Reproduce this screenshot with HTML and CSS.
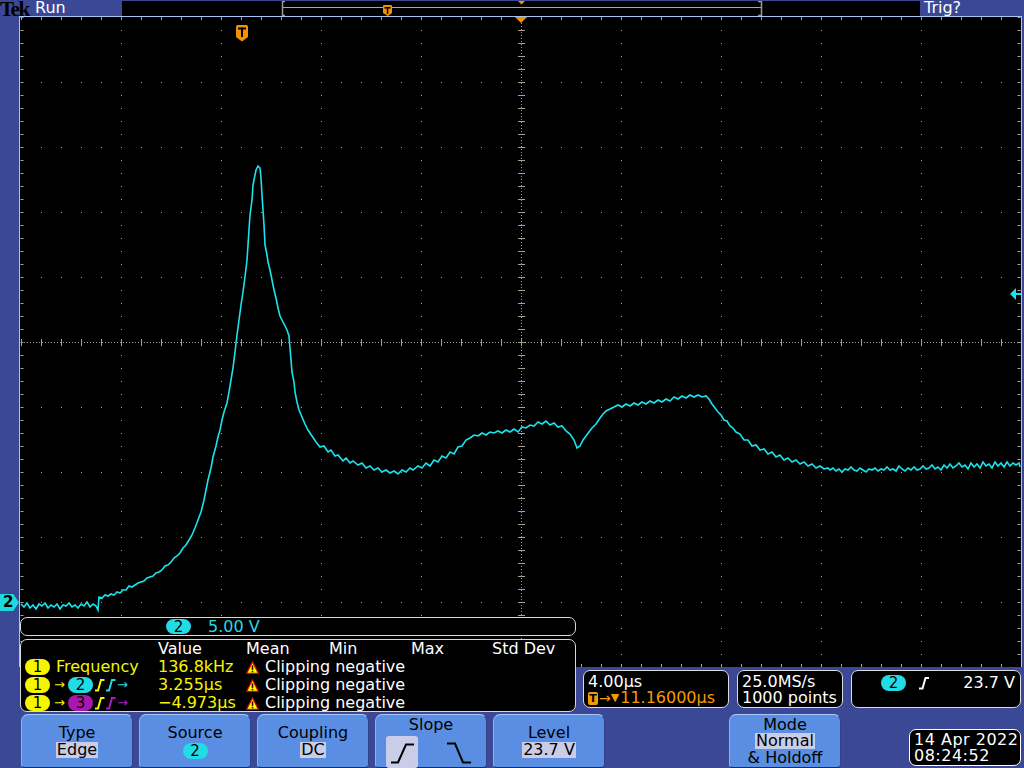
FILE: index.html
```
<!DOCTYPE html>
<html>
<head>
<meta charset="utf-8">
<link rel="stylesheet" href="styles.css">
</head>
<body>
<div class="screen">
  <div class="topbar">
    <span class="tek">Tek</span>
    <span class="run">Run</span>
    <div class="record">
      <svg width="798" height="15" viewBox="0 0 798 15">
        <rect x="0" y="0" width="798" height="15" fill="#000"/>
        <path d="M163 0.5H160.5V14.5H163" fill="none" stroke="#9a9a9a" stroke-width="1.5"/>
        <path d="M636 0.5H639.5V14.5H636" fill="none" stroke="#9a9a9a" stroke-width="1.5"/>
        <line x1="161" y1="6.5" x2="639" y2="6.5" stroke="#1ee0e8" stroke-width="1"/>
        <path d="M262 4H269Q270 4 270 5V12L266 15L261 12V5Q261 4 262 4Z" fill="#f39200"/>
        <rect x="262.5" y="6" width="6" height="1.6" fill="#000"/>
        <rect x="264.8" y="6" width="1.5" height="7" fill="#000"/>
        <path d="M396 0H403L399.5 3.5Z" fill="#f39200"/>
      </svg>
    </div>
    <span class="trig">Trig?</span>
  </div>

  <div class="middle">
    <div class="lstrip"><div class="chmark">2</div></div>
    <svg class="grat" width="1005" height="651" viewBox="19 16 1005 651">
      <rect x="20" y="17" width="1001" height="650" fill="#000"/>
      <g stroke="#a8a28e" stroke-width="1">
        <line x1="121.5" y1="17" x2="121.5" y2="667" stroke-dasharray="1 12"/>
        <line x1="221.5" y1="17" x2="221.5" y2="667" stroke-dasharray="1 12"/>
        <line x1="321.5" y1="17" x2="321.5" y2="667" stroke-dasharray="1 12"/>
        <line x1="421.5" y1="17" x2="421.5" y2="667" stroke-dasharray="1 12"/>
        <line x1="621.5" y1="17" x2="621.5" y2="667" stroke-dasharray="1 12"/>
        <line x1="721.5" y1="17" x2="721.5" y2="667" stroke-dasharray="1 12"/>
        <line x1="821.5" y1="17" x2="821.5" y2="667" stroke-dasharray="1 12"/>
        <line x1="921.5" y1="17" x2="921.5" y2="667" stroke-dasharray="1 12"/>
        <line x1="21" y1="82.5" x2="1021" y2="82.5" stroke-dasharray="1 19"/>
        <line x1="21" y1="147.5" x2="1021" y2="147.5" stroke-dasharray="1 19"/>
        <line x1="21" y1="212.5" x2="1021" y2="212.5" stroke-dasharray="1 19"/>
        <line x1="21" y1="277.5" x2="1021" y2="277.5" stroke-dasharray="1 19"/>
        <line x1="21" y1="407.5" x2="1021" y2="407.5" stroke-dasharray="1 19"/>
        <line x1="21" y1="472.5" x2="1021" y2="472.5" stroke-dasharray="1 19"/>
        <line x1="21" y1="537.5" x2="1021" y2="537.5" stroke-dasharray="1 19"/>
        <line x1="21" y1="602.5" x2="1021" y2="602.5" stroke-dasharray="1 19"/>
        <line x1="21" y1="342.5" x2="1021" y2="342.5" stroke-dasharray="1 2"/>
        <line x1="521.5" y1="17" x2="521.5" y2="667" stroke-dasharray="1 2"/>
        <line x1="21" y1="342.5" x2="1021" y2="342.5" stroke-width="7" stroke-dasharray="1 19"/>
        <line x1="521.5" y1="17" x2="521.5" y2="667" stroke-width="7" stroke-dasharray="1 12"/>
        <line x1="21" y1="18.5" x2="1021" y2="18.5" stroke-width="3" stroke-dasharray="1 19"/>
        <line x1="21" y1="665.5" x2="1021" y2="665.5" stroke-width="3" stroke-dasharray="1 19"/>
        <line x1="22" y1="17" x2="22" y2="667" stroke-width="3" stroke-dasharray="1 12"/>
        <line x1="1019" y1="17" x2="1019" y2="667" stroke-width="3" stroke-dasharray="1 12"/>
      </g>
      <line x1="19" y1="16.5" x2="1022" y2="16.5" stroke="#a4c4f4"/>
      <line x1="19.5" y1="16" x2="19.5" y2="667" stroke="#a4c4f4"/>
      <line x1="1021.5" y1="16" x2="1021.5" y2="667" stroke="#a4c4f4"/>
      <path d="M515 17H527L521 23Z" fill="#f39200"/>
      <path d="M237.5 25H246.5Q248 25 248 26.5V37L242 41.5L236 37V26.5Q236 25 237.5 25Z" fill="#f39200"/>
      <rect x="238" y="27.5" width="8" height="2" fill="#000"/>
      <rect x="241" y="27.5" width="2" height="9.5" fill="#000"/>
      <path d="M1010 294L1016 288V300Z" fill="#1ee0e8"/>
      <rect x="1016" y="293" width="5" height="2" fill="#1ee0e8"/>
      <polyline class="wave" points="21,604 24,607 27,603 30,608 33,605 36,609 39,604 42,606 45,603 48,608 51,605 54,607 57,604 60,609 63,605 66,606 69,603 72,607 75,605 78,608 81,604 84,606 87,602 90,607 93,604 96,606 98,610 99,597 102,598 105,595 108,596 111,594 114,595 117,592 120,593 123,590 126,590 129,586 132,587 135,585 138,583 141,582 144,581 147,578 150,577 153,576 156,573 159,572 162,570 165,566 168,565 171,562 174,558 177,556 180,553 183,548 186,545 189,540 192,535 195,528 198,520 201,512 204,500 206,490 208,480 211,468 213,457 216,446 218,437 220,430 222,420 224,412 227,403 229,392 231,380 233,368 235,352 237,335 239,320 241,305 243,292 245,277 247,260 248,245 249,230 250,215 252,200 253,185 255,175 256,170 258,166 260,168 261,178 262,195 263,210 264,225 265,245 267,255 268,262 270,270 272,280 274,290 276,298 278,308 280,316 283,322 285,326 287,330 289,336 290,348 291,360 292,372 294,382 295,392 297,402 299,410 302,417 305,424 308,430 312,436 316,442 320,447 324,446 328,452 331,450 335,456 338,455 343,461 346,458 350,463 353,461 358,465 362,463 366,468 370,466 374,470 378,468 382,472 386,470 390,473 394,471 398,474 402,470 406,472 410,468 413,470 418,466 422,468 426,463 430,466 434,460 438,462 442,456 446,458 450,452 454,454 458,447 462,446 466,440 470,438 474,435 478,436 482,433 486,435 490,432 494,433 498,431 502,433 506,430 510,432 514,429 518,432 522,427 526,428 530,425 534,426 538,422 542,424 546,421 550,425 554,423 558,427 562,426 566,431 570,434 574,440 577,448 580,446 583,440 586,436 589,432 592,428 596,424 600,418 603,414 606,411 610,409 614,407 618,405 622,407 626,404 630,406 634,403 638,405 642,402 646,404 650,401 654,403 658,400 662,402 666,399 670,401 674,397 678,399 682,396 686,398 690,395 694,397 698,395 702,397 706,396 709,399 712,404 715,408 718,412 721,415 724,420 727,421 730,426 733,428 736,432 740,434 744,440 748,440 752,446 756,445 760,450 764,449 768,454 772,452 776,457 780,455 784,460 788,458 792,462 796,460 800,464 804,462 808,466 812,464 816,468 820,466 824,469 828,468 830,470 833,468 836,471 839,469 842,472 845,469 848,470 851,467 854,470 857,471 860,468 863,470 866,472 869,469 872,470 875,468 878,471 881,469 884,470 887,467 890,470 893,469 896,471 899,466 902,469 905,471 908,468 911,470 914,467 917,470 920,469 923,466 926,469 929,468 932,465 935,469 938,467 941,470 944,465 947,468 950,464 953,468 956,466 959,463 962,467 965,465 968,469 971,463 974,467 977,464 980,468 983,462 986,466 989,464 992,468 995,462 998,466 1001,463 1004,467 1007,462 1010,466 1013,463 1016,465 1019,463 1020,467"/>
    </svg>
  </div>

  <div class="inforow">
    <div class="ibox ibox-a">
      <div>4.00µs</div>
      <div class="orange"><span class="ticon">T</span><span class="arr">→</span><span class="tri">▼</span>11.16000µs</div>
    </div>
    <div class="ibox ibox-b">
      <div>25.0MS/s</div>
      <div>1000 points</div>
    </div>
    <div class="ibox ibox-c">
      <span class="pill cyan">2</span>
      <svg class="edge" width="11" height="14" viewBox="0 0 11 14"><path d="M0 12.5H3.5L6.5 2H10" fill="none" stroke="#fff" stroke-width="2"/></svg>
      <span class="lvl">23.7 V</span>
    </div>
  </div>

  <div class="softkeys">
    <div class="key"><span>Type</span><span class="hl">Edge</span></div>
    <div class="key"><span>Source</span><span class="pill cyan kpill">2</span></div>
    <div class="key"><span>Coupling</span><span class="hl">DC</span></div>
    <div class="key key-slope">
      <span>Slope</span>
      <div class="slope-row">
        <div class="slope-sel">
          <svg width="32" height="32" viewBox="0 0 32 32"><path d="M5 26.5H12L20 8.5H28" fill="none" stroke="#000" stroke-width="2"/></svg>
        </div>
        <svg class="fall" width="26" height="32" viewBox="0 0 26 32"><path d="M0 7.5H8L16 26.5H24" fill="none" stroke="#000" stroke-width="2"/></svg>
      </div>
    </div>
    <div class="key"><span>Level</span><span class="hl">23.7 V</span></div>
    <div class="key key-mode"><span>Mode</span><span class="hl">Normal</span><span>&amp; Holdoff</span></div>
    <div class="date"><div>14 Apr 2022</div><div>08:24:52</div></div>
  </div>

  <div class="meas">
    <div class="scalebox"><span class="pill cyan">2</span><span class="scaleval">5.00 V</span></div>
    <div class="mtable">
      <span></span><span>Value</span><span>Mean</span><span>Min</span><span>Max</span><span>Std Dev</span>

      <span class="lab"><span class="pill yellow">1</span><span class="ytext">Frequency</span></span>
      <span class="ytext">136.8kHz</span>
      <span class="mean"><svg class="warn" width="13" height="13" viewBox="0 0 13 13"><path d="M6.5 0.8L12.3 12.3H0.7Z" fill="#ff0" stroke="#e00000" stroke-width="1.2"/><rect x="5.7" y="4.3" width="1.6" height="4.6" fill="#300"/><rect x="5.7" y="9.8" width="1.6" height="1.5" fill="#300"/></svg>Clipping negative</span>

      <span class="lab"><span class="pill yellow">1</span><span class="arr ytext">→</span><span class="pill cyan">2</span><svg class="edge" width="10" height="14" viewBox="0 0 10 14"><path d="M0 12.5H3L6 2H9.5" fill="none" stroke="#f5f500" stroke-width="2"/></svg><svg class="edge" width="10" height="14" viewBox="0 0 10 14"><path d="M0 12.5H3L6 2H9.5" fill="none" stroke="#21dce4" stroke-width="2"/></svg><span class="arr ctext">→</span></span>
      <span class="ytext">3.255µs</span>
      <span class="mean"><svg class="warn" width="13" height="13" viewBox="0 0 13 13"><path d="M6.5 0.8L12.3 12.3H0.7Z" fill="#ff0" stroke="#e00000" stroke-width="1.2"/><rect x="5.7" y="4.3" width="1.6" height="4.6" fill="#300"/><rect x="5.7" y="9.8" width="1.6" height="1.5" fill="#300"/></svg>Clipping negative</span>

      <span class="lab"><span class="pill yellow">1</span><span class="arr ytext">→</span><span class="pill magenta">3</span><svg class="edge" width="10" height="14" viewBox="0 0 10 14"><path d="M0 12.5H3L6 2H9.5" fill="none" stroke="#f5f500" stroke-width="2"/></svg><svg class="edge" width="10" height="14" viewBox="0 0 10 14"><path d="M0 12.5H3L6 2H9.5" fill="none" stroke="#b01cb8" stroke-width="2"/></svg><span class="arr mtext">→</span></span>
      <span class="ytext">−4.973µs</span>
      <span class="mean"><svg class="warn" width="13" height="13" viewBox="0 0 13 13"><path d="M6.5 0.8L12.3 12.3H0.7Z" fill="#ff0" stroke="#e00000" stroke-width="1.2"/><rect x="5.7" y="4.3" width="1.6" height="4.6" fill="#300"/><rect x="5.7" y="9.8" width="1.6" height="1.5" fill="#300"/></svg>Clipping negative</span>
    </div>
  </div>
</div>
</body>
</html>
```
FILE: styles.css
```
* { box-sizing: border-box; }
html, body { margin: 0; padding: 0; background: #3a4896; }
body { font-family: "DejaVu Sans", "Noto Sans", sans-serif; }

.screen {
  position: relative;
  width: 1024px;
  height: 768px;
  overflow: hidden;
  background: #3a4896;
  display: flex;
  flex-direction: column;
}

/* top bar */
.topbar { height: 16px; display: flex; align-items: stretch; }
.tek {
  width: 35px;
  font-family: "Liberation Serif", serif;
  font-weight: bold;
  font-size: 21px;
  line-height: 16px;
  letter-spacing: -1.5px;
  color: #000;
  margin-top: 1px;
}
.run { width: 87px; color: #fff; font-size: 16px; line-height: 16px; }
.record { width: 798px; padding-top: 1px; }
.record svg { display: block; }
.trig { color: #fff; font-size: 16px; line-height: 16px; padding-left: 4px; }

/* graticule */
.middle { height: 651px; display: flex; }
.lstrip {
  width: 19px;
  display: flex;
  flex-direction: column;
  justify-content: flex-end;
  padding-bottom: 56px;
}
.chmark {
  width: 19px;
  height: 17px;
  background: #1ed8e0;
  clip-path: polygon(0 0, 70% 0, 100% 50%, 70% 100%, 0 100%);
  color: #000;
  font-size: 15px;
  font-weight: bold;
  line-height: 17px;
  padding-left: 3px;
}
.grat { display: block; flex: none; }
.wave { fill: none; stroke: #19e4ee; stroke-width: 1.6; stroke-linejoin: miter; }

/* info boxes */
.inforow { height: 47px; display: flex; gap: 8px; padding: 3px 0 0 583px; }
.ibox {
  height: 38px;
  border: 1px solid #dcdcdc;
  border-radius: 7px;
  background: #000;
  color: #fff;
  font-size: 16px;
  line-height: 16px;
  padding: 3px 0 0 4px;
}
.ibox-a { width: 146px; }
.ibox-b { width: 106px; }
.ibox-c { width: 170px; display: flex; align-items: flex-start; padding-left: 29px; padding-top: 4px; }
.orange { color: #f59a00; display: flex; align-items: center; }
.ticon {
  display: inline-block;
  width: 10px;
  height: 13px;
  background: #f59a00;
  color: #000;
  border-radius: 2px;
  font-size: 11px;
  font-weight: bold;
  line-height: 13px;
  text-align: center;
  margin-right: 1px;
}
.orange .arr { font-size: 14px; }
.tri { font-size: 11px; margin: 0 1px 0 0; }
.ibox-c .edge { margin: 1px 0 0 13px; }
.lvl { margin-left: auto; padding-right: 5px; }

/* pills */
.pill {
  display: inline-flex;
  justify-content: center;
  align-items: center;
  width: 25px;
  height: 16px;
  border-radius: 8px;
  color: #000;
  font-size: 15px;
  line-height: 16px;
  flex: none;
}
.cyan { background: #21dce4; }
.yellow { background: #f5f500; }
.magenta { background: #a817ae; }

/* soft keys */
.softkeys { height: 54px; display: flex; gap: 6px; padding-left: 21px; }
.key {
  width: 112px;
  height: 54px;
  background: #5a8ee2;
  border: 1px solid;
  border-color: #a8c8f8 #30428c #1c2766 #8cb2f0;
  border-radius: 7px 7px 4px 4px;
  color: #000;
  font-size: 16px;
  line-height: 18px;
  display: flex;
  flex-direction: column;
  align-items: center;
  justify-content: center;
}
.hl { background: #c9cde8; line-height: 16px; padding: 0 1px; }
.kpill { margin-top: 1px; }
.key-slope { justify-content: flex-start; padding-top: 1px; }
.slope-row { display: flex; width: 100%; padding-left: 10px; margin-top: 2px; align-items: flex-start; }
.slope-sel { width: 32px; height: 32px; background: #c9cde8; border-radius: 3px; }
.slope-sel svg, .fall { display: block; }
.fall { margin-left: 29px; }
.key-mode { margin-left: 118px; line-height: 17px; }
.date {
  width: 112px;
  height: 37px;
  margin: 15px 0 0 62px;
  border: 1px solid #fff;
  border-radius: 7px;
  background: #000;
  color: #fff;
  font-size: 16px;
  line-height: 16px;
  letter-spacing: 0.5px;
  padding: 2px 0 0 4px;
}

/* measurement overlay */
.meas {
  position: absolute;
  left: 20px;
  top: 617px;
  width: 556px;
  display: flex;
  flex-direction: column;
  gap: 3px;
}
.scalebox {
  height: 19px;
  border: 1px solid #d8d8d8;
  border-radius: 7px;
  background: #000;
  display: flex;
  align-items: center;
  padding-left: 145px;
  color: #21dce4;
  font-size: 16px;
}
.scalebox .pill { height: 15px; }
.scaleval { margin-left: 17px; }
.mtable {
  height: 73px;
  border: 1px solid #d8d8d8;
  border-radius: 7px;
  background: #000;
  color: #fff;
  font-size: 16px;
  line-height: 18px;
  display: grid;
  grid-template-columns: 137px 88px 83px 82px 81px 1fr;
  grid-auto-rows: 18px;
  padding-top: 0;
}
.lab { display: flex; align-items: center; padding-left: 4px; white-space: nowrap; }
.lab .ytext { margin-left: 6px; }
.lab .arr { font-size: 13px; margin: 0 3px 0 4px; }
.lab .edge { margin-left: 2px; }
.lab .edge + .edge { margin-left: 1px; }
.lab .arr.ctext, .lab .arr.mtext { margin-left: 1px; }
.ytext { color: #f5f500; }
.ctext { color: #21dce4; }
.mtext { color: #b01cb8; }
.mean { grid-column: span 4; display: flex; align-items: center; white-space: nowrap; }
.warn { margin-right: 6px; flex: none; }
```
